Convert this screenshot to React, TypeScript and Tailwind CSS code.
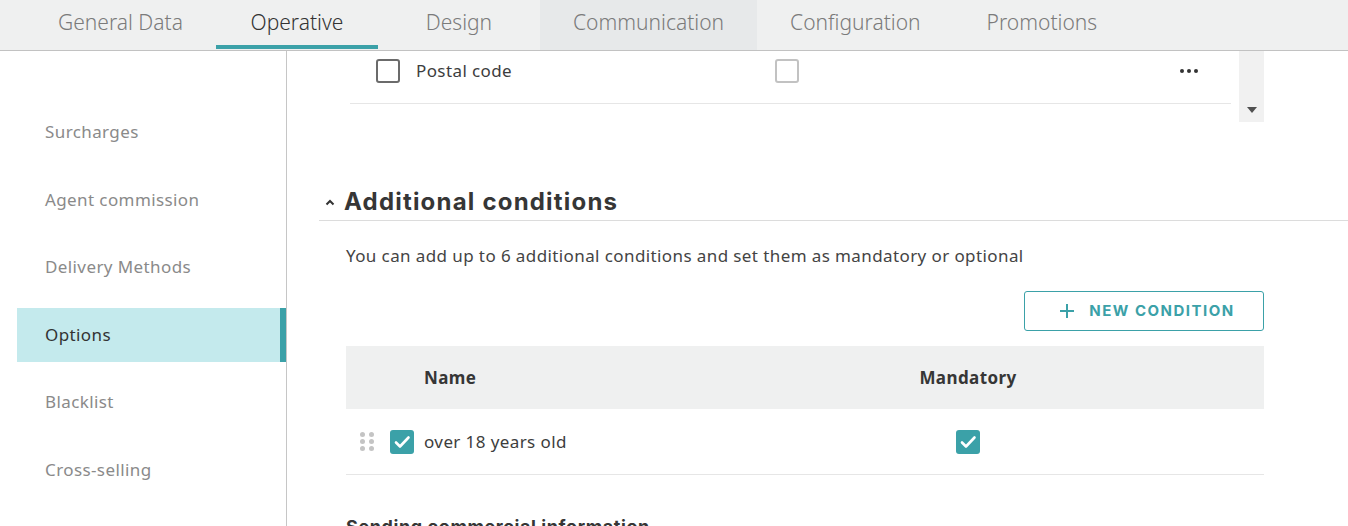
import React from 'react';

const TEAL = '#3ba1a8';

const TABS = ['General Data', 'Operative', 'Design', 'Communication', 'Configuration', 'Promotions'];
const MENU = ['Surcharges', 'Agent commission', 'Delivery Methods', 'Options', 'Blacklist', 'Cross-selling'];

function CheckBox({ checked, light }: { checked?: boolean; light?: boolean }) {
  if (checked) {
    return (
      <span className="w-[24px] h-[24px] rounded-[3px] bg-[#3ba1a8] flex items-center justify-center shrink-0">
        <svg width="18" height="18" viewBox="0 0 18 18" fill="none">
          <path d="M3 9.5l4 4L15.5 4.5" stroke="white" strokeWidth="2.6" strokeLinecap="round" strokeLinejoin="round" />
        </svg>
      </span>
    );
  }
  return (
    <span
      className={
        'w-[24px] h-[24px] rounded-[3px] border-2 shrink-0 ' +
        (light ? 'border-[#c2c2c2]' : 'border-[#6b6b6b]')
      }
    />
  );
}

function DragHandle() {
  return (
    <span className="grid grid-cols-2 gap-x-[3px] gap-y-[2px] w-[14px] shrink-0">
      {[0, 1, 2, 3, 4, 5].map((i) => (
        <span key={i} className="w-[5px] h-[5px] rounded-full bg-[#c4c4c4]" />
      ))}
    </span>
  );
}

export default function App() {
  return (
    <div className="w-[1348px] h-[526px] overflow-hidden bg-white flex flex-col font-['Noto_Sans',sans-serif] tracking-[0.4px]">
      {/* tab bar */}
      <nav className="h-[51px] shrink-0 bg-[#eff0f0] border-b border-[#c2c2c2] flex pl-[25px] tracking-normal">
        {TABS.map((t) => {
          const active = t === 'Operative';
          const hover = t === 'Communication';
          return (
            <div
              key={t}
              className={
                'min-w-[162px] px-[33px] flex flex-col font-[\'Roboto\',sans-serif] font-light text-[21px] ' +
                (hover ? 'bg-[#e7e9ea] ' : '') +
                (active ? 'text-[#333333]' : 'text-[#7b7b7b]')
              }
            >
              <span className="flex-1 flex items-center justify-center whitespace-nowrap">{t}</span>
              <span className={'h-[4px] mb-px -mx-[33px] ' + (active ? 'bg-[#3ba1a8]' : '')} />
            </div>
          );
        })}
      </nav>

      <div className="flex flex-1 min-h-0">
        {/* side menu */}
        <aside className="w-[287px] shrink-0 border-r border-[#c6c6c6] pt-[54px] pl-[17px] flex flex-col gap-[13.5px]">
          {MENU.map((m) => {
            const active = m === 'Options';
            return (
              <div
                key={m}
                className={
                  'h-[54px] flex items-center pl-[28px] text-[17px] ' +
                  (active ? 'bg-[#c4eaed] border-r-[6px] border-[#3ba1a8] text-[#333333]' : 'text-[#8a8a8a]')
                }
              >
                {m}
              </div>
            );
          })}
        </aside>

        {/* main */}
        <main className="flex-1 min-w-0 flex flex-col">
          {/* scrolled table remainder */}
          <div className="ml-[59px] w-[918px] h-[71px] flex shrink-0">
            <div className="flex-1 overflow-hidden">
              <div className="-mt-[13px] ml-[4px] mr-[8px] h-[66px] border-b border-[#e6e6e6] flex items-center text-[17px] text-[#3d3d3d]">
                <div className="w-[425px] pl-[26px] flex items-center gap-[16px]">
                  <CheckBox />
                  <span>Postal code</span>
                </div>
                <CheckBox light />
                <div className="flex-1 flex justify-end pr-[33px] gap-[3px]">
                  <span className="w-[4px] h-[4px] rounded-full bg-[#333]" />
                  <span className="w-[4px] h-[4px] rounded-full bg-[#333]" />
                  <span className="w-[4px] h-[4px] rounded-full bg-[#333]" />
                </div>
              </div>
            </div>
            <div className="w-[25px] bg-[#f1f1f1] flex flex-col justify-end items-center pb-[9px]">
              <svg width="10" height="6" viewBox="0 0 10 6">
                <path d="M0 0h10L5 6z" fill="#505050" />
              </svg>
            </div>
          </div>

          {/* section heading */}
          <div className="mt-[64px] ml-[32px] pl-[6px] pb-[2px] border-b border-[#dcdcdc] flex items-center gap-[9px]">
            <svg width="10" height="7" viewBox="0 0 10 7" fill="none">
              <path d="M1.5 5.5L5 2l3.5 3.5" stroke="#333" strokeWidth="2" />
            </svg>
            <h2 className="text-[24px] leading-[32px] font-bold text-[#363636] font-['Inter',sans-serif] tracking-[1.2px]">
              Additional conditions
            </h2>
          </div>

          <div className="ml-[59px] w-[918px] flex flex-col">
            <p className="mt-[23px] text-[17px] leading-[24px] text-[#444444]">
              You can add up to 6 additional conditions and set them as mandatory or optional
            </p>

            <div className="mt-[23px] flex justify-end">
              <button
                className="w-[240px] h-[40px] border border-[#3ba1a8] rounded-[3px] flex items-center justify-center gap-[14px] pl-[6px] text-[#3ba1a8] font-bold text-[15px] font-['Inter',sans-serif] tracking-[1.5px]"
                style={{ color: TEAL }}
              >
                <svg width="16" height="16" viewBox="0 0 16 16" fill="none">
                  <path d="M8 1v14M1 8h14" stroke={TEAL} strokeWidth="2" />
                </svg>
                NEW CONDITION
              </button>
            </div>

            {/* conditions table */}
            <div className="mt-[15px] h-[63px] bg-[#eff0f0] flex items-center font-bold text-[17px] text-[#363636]">
              <span className="w-[522px] pl-[78px]">Name</span>
              <span className="w-[200px] text-center">Mandatory</span>
            </div>
            <div className="h-[66px] border-b border-[#e6e6e6] flex items-center text-[17px] text-[#3d3d3d]">
              <div className="w-[522px] pl-[14px] flex items-center">
                <DragHandle />
                <span className="ml-[16px]">
                  <CheckBox checked />
                </span>
                <span className="ml-[10px]">over 18 years old</span>
              </div>
              <div className="w-[200px] flex justify-center">
                <CheckBox checked />
              </div>
            </div>

            <h3 className="mt-[38px] text-[18px] font-bold text-[#363636] font-['Inter',sans-serif] tracking-[0.6px]">
              Sending commercial information
            </h3>
          </div>
        </main>
      </div>
    </div>
  );
}
